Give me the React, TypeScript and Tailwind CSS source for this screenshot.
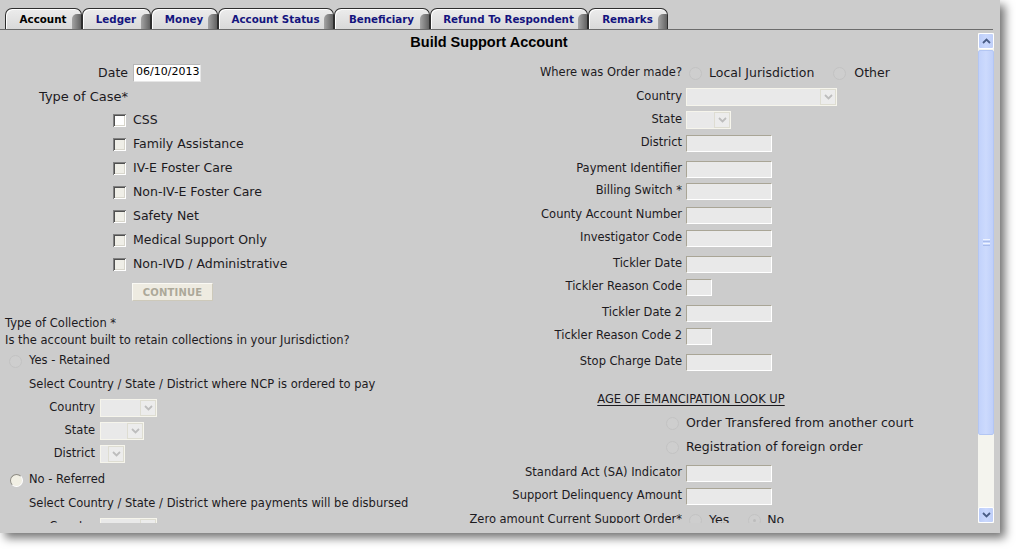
import React from "react";

type TabDef = { label: string; w: string; active?: boolean };

const tabs: TabDef[] = [
  { label: "Account", w: "w-[77px]", active: true },
  { label: "Ledger", w: "w-[69px]" },
  { label: "Money", w: "w-[67px]" },
  { label: "Account Status", w: "w-[116px]" },
  { label: "Beneficiary", w: "w-[96px]" },
  { label: "Refund To Respondent", w: "w-[158px]" },
  { label: "Remarks", w: "w-[80px]" },
];

function Tab({ label, w, active }: TabDef) {
  return (
    <div
      className={`${w} h-[21px] flex rounded-t-[7px] border border-b-0 border-[#2e2e2e] bg-[linear-gradient(to_bottom,#ececec,#d9d9d9)] shadow-[inset_1px_1px_0_#ffffff] overflow-hidden`}
    >
      <div
        className={`flex-1 pl-[8px] flex items-center justify-center text-[10.3px] font-bold leading-none whitespace-nowrap ${
          active ? "text-black" : "text-[#14147e]"
        }`}
      >
        {label}
      </div>
      <div className="w-[9px] mt-[5px] rounded-tl-[5px] bg-[linear-gradient(to_right,#a4a4a4,#626262)]" />
    </div>
  );
}

function Chevron({ up, className }: { up?: boolean; className: string }) {
  return (
    <svg width="9" height="6" viewBox="0 0 9 6" className={className}>
      {up ? (
        <path d="M1 5 L4.5 1.5 L8 5" fill="none" strokeWidth="1.8" />
      ) : (
        <path d="M1 1 L4.5 4.5 L8 1" fill="none" strokeWidth="1.8" />
      )}
    </svg>
  );
}

function FaintRadio({ dot }: { dot?: boolean }) {
  return (
    <span className="w-[13px] h-[13px] rounded-full border border-[#c3c3c3] bg-[#cecece] flex items-center justify-center shrink-0">
      {dot && <span className="w-[3px] h-[3px] rounded-full bg-[#bcbcbc]" />}
    </span>
  );
}

function RealRadio() {
  return (
    <span className="w-[13px] h-[13px] rounded-full border border-[#8e8c84] border-r-[#ffffff] border-b-[#ffffff] bg-[#f1efe4] shrink-0" />
  );
}

function Checkbox({ white }: { white?: boolean }) {
  return (
    <span
      className={`w-[13px] h-[13px] shrink-0 ${
        white ? "bg-white" : "bg-[#efeee7]"
      } shadow-[inset_1px_1px_0_#808080,inset_-1px_-1px_0_#ffffff,inset_2px_2px_0_#505050,inset_-2px_-2px_0_#d8d6cc]`}
    />
  );
}

function TextBox({ w }: { w: string }) {
  return (
    <span
      className={`${w} h-[17px] shrink-0 bg-[#e9e9e9] border border-t-[#a9a596] border-l-[#a9a596] border-r-[#ffffff] border-b-[#ffffff]`}
    />
  );
}

function Select({ w }: { w: string }) {
  return (
    <span className={`${w} h-[18px] shrink-0 flex bg-[#e9e9e9] border border-[#f6f5ec]`}>
      <span className="flex-1" />
      <span className="w-[16px] h-full bg-[#ececec] border border-[#deddd2] flex items-center justify-center">
        <Chevron className="stroke-[#bdbdbd]" />
      </span>
    </span>
  );
}

function Row({ h, children, className }: { h: string; children: React.ReactNode; className?: string }) {
  return (
    <div className={`${h} shrink-0`}>
      <div className={`h-[22px] flex items-center ${className ?? ""}`}>{children}</div>
    </div>
  );
}

function RLabel({ text }: { text: string }) {
  return (
    <span className="w-[276px] shrink-0 text-right text-[11.5px] whitespace-nowrap">{text}</span>
  );
}

function RField({ h, label, children }: { h: string; label: string; children: React.ReactNode }) {
  return (
    <Row h={h}>
      <RLabel text={label} />
      <span className="ml-[4px] flex items-center">{children}</span>
    </Row>
  );
}

function LSel({ h, label, w }: { h: string; label: string; w: string }) {
  return (
    <Row h={h}>
      <span className="w-[95px] shrink-0 text-right text-[11.5px]">{label}</span>
      <span className="ml-[5px] flex">
        <Select w={w} />
      </span>
    </Row>
  );
}

function CheckRow({ label, white, h }: { label: string; white?: boolean; h?: string }) {
  return (
    <Row h={h ?? "h-[24px]"} className="pl-[113px]">
      <Checkbox white={white} />
      <span className="ml-[7px] text-[12.5px] whitespace-nowrap">{label}</span>
    </Row>
  );
}

function ScrollBtn({ up }: { up?: boolean }) {
  return (
    <div className="h-[16px] w-full shrink-0 rounded-[2px] border border-white bg-[linear-gradient(to_right,#bccdf9,#cad8fd,#bfcff9)] flex items-center justify-center">
      <Chevron up={up} className="stroke-[#4a5d86]" />
    </div>
  );
}

export default function App() {
  return (
    <div className="w-[1016px] h-[549px] bg-white overflow-hidden font-['DejaVu_Sans',Verdana,sans-serif] text-[#1c1a1e]">
      <div className="w-[1000px] h-[533px] bg-[#cccccc] shadow-[5px_5px_9px_rgba(0,0,0,0.55)] flex flex-col">
        {/* tab strip */}
        <div className="w-[993px] h-[30px] shrink-0 flex items-end pl-[5px] border-b border-[#6c6c6c]">
          {tabs.map((t) => (
            <Tab key={t.label} {...t} />
          ))}
        </div>

        <div className="flex flex-1 min-h-0">
          {/* content */}
          <div className="w-[978px] h-[493px] overflow-hidden shrink-0">
            <div className="pt-[4px] h-[20px] text-center font-['Liberation_Sans',Arial,sans-serif] font-bold text-[14.5px] leading-[16px] text-black">
              Build Support Account
            </div>

            <div className="mt-[12px] flex items-start">
              {/* left column */}
              <div className="w-[406px] shrink-0 flex flex-col">
                <Row h="h-[24px]">
                  <span className="w-[128px] shrink-0 text-right text-[12.5px]">Date</span>
                  <span className="ml-[5px] -mt-[1px] w-[68px] h-[18px] bg-white border border-[#b6b6b6] border-r-[#e6e6e6] border-b-[#e6e6e6] flex items-center pl-[2px] text-[11px] text-black">
                    06/10/2013
                  </span>
                </Row>
                <Row h="h-[23px]" className="pl-[39px]">
                  <span className="text-[13px]">Type of Case*</span>
                </Row>
                <CheckRow label="CSS" white />
                <CheckRow label="Family Assistance" />
                <CheckRow label="IV-E Foster Care" />
                <CheckRow label="Non-IV-E Foster Care" />
                <CheckRow label="Safety Net" />
                <CheckRow label="Medical Support Only" />
                <CheckRow label="Non-IVD / Administrative" h="h-[28px]" />
                <Row h="h-[32px]" className="pl-[132px]">
                  <span className="w-[81px] h-[18px] flex items-center justify-center bg-[#eeebe1] border border-[#faf9f4] border-r-[#cdc9ba] border-b-[#cdc9ba] text-[10px] font-bold text-[#aca899] tracking-[0.2px]">
                    CONTINUE
                  </span>
                </Row>
                <Row h="h-[17px]" className="pl-[5px]">
                  <span className="text-[11.5px]">Type of Collection *</span>
                </Row>
                <Row h="h-[20px]" className="pl-[5px]">
                  <span className="text-[11.5px] whitespace-nowrap">
                    Is the account built to retain collections in your Jurisdiction?
                  </span>
                </Row>
                <Row h="h-[24px]" className="pl-[9px]">
                  <FaintRadio />
                  <span className="ml-[7px] text-[11.5px]">Yes - Retained</span>
                </Row>
                <Row h="h-[23px]" className="pl-[29px]">
                  <span className="text-[11.5px] whitespace-nowrap">
                    Select Country / State / District where NCP is ordered to pay
                  </span>
                </Row>
                <LSel h="h-[23px]" label="Country" w="w-[57px]" />
                <LSel h="h-[23px]" label="State" w="w-[44px]" />
                <LSel h="h-[26px]" label="District" w="w-[25px]" />
                <Row h="h-[24px]" className="pl-[10px]">
                  <RealRadio />
                  <span className="ml-[6px] text-[11.5px]">No - Referred</span>
                </Row>
                <Row h="h-[23px]" className="pl-[29px]">
                  <span className="text-[11.5px] whitespace-nowrap">
                    Select Country / State / District where payments will be disbursed
                  </span>
                </Row>
                <LSel h="h-[23px]" label="Country" w="w-[57px]" />
              </div>

              {/* right column */}
              <div className="w-[570px] shrink-0 flex flex-col">
                <Row h="h-[24px]">
                  <RLabel text="Where was Order made?" />
                  <span className="ml-[7px]">
                    <FaintRadio />
                  </span>
                  <span className="ml-[7px] text-[12.5px] whitespace-nowrap">Local Jurisdiction</span>
                  <span className="ml-[19px]">
                    <FaintRadio />
                  </span>
                  <span className="ml-[8px] text-[12.5px]">Other</span>
                </Row>
                <RField h="h-[23px]" label="Country">
                  <Select w="w-[151px]" />
                </RField>
                <RField h="h-[23px]" label="State">
                  <Select w="w-[45px]" />
                </RField>
                <RField h="h-[26px]" label="District">
                  <TextBox w="w-[86px]" />
                </RField>
                <RField h="h-[22px]" label="Payment Identifier">
                  <TextBox w="w-[86px]" />
                </RField>
                <RField h="h-[24px]" label="Billing Switch *">
                  <TextBox w="w-[86px]" />
                </RField>
                <RField h="h-[23px]" label="County Account Number">
                  <TextBox w="w-[86px]" />
                </RField>
                <RField h="h-[26px]" label="Investigator Code">
                  <TextBox w="w-[86px]" />
                </RField>
                <RField h="h-[23px]" label="Tickler Date">
                  <TextBox w="w-[86px]" />
                </RField>
                <RField h="h-[26px]" label="Tickler Reason Code">
                  <TextBox w="w-[26px]" />
                </RField>
                <RField h="h-[23px]" label="Tickler Date 2">
                  <TextBox w="w-[86px]" />
                </RField>
                <RField h="h-[26px]" label="Tickler Reason Code 2">
                  <TextBox w="w-[26px]" />
                </RField>
                <RField h="h-[38px]" label="Stop Charge Date">
                  <TextBox w="w-[86px]" />
                </RField>
                <Row h="h-[23px]" className="justify-center">
                  <span className="text-[11.5px] underline underline-offset-[2px]">AGE OF EMANCIPATION LOOK UP</span>
                </Row>
                <Row h="h-[24px]">
                  <span className="w-[273px] shrink-0 flex justify-end">
                    <FaintRadio />
                  </span>
                  <span className="ml-[7px] text-[12.5px] whitespace-nowrap">Order Transfered from another court</span>
                </Row>
                <Row h="h-[26px]">
                  <span className="w-[273px] shrink-0 flex justify-end">
                    <FaintRadio />
                  </span>
                  <span className="ml-[7px] text-[12.5px] whitespace-nowrap">Registration of foreign order</span>
                </Row>
                <RField h="h-[23px]" label="Standard Act (SA) Indicator">
                  <TextBox w="w-[86px]" />
                </RField>
                <RField h="h-[24px]" label="Support Delinquency Amount">
                  <TextBox w="w-[86px]" />
                </RField>
                <Row h="h-[23px]">
                  <RLabel text="Zero amount Current Support Order*" />
                  <span className="ml-[7px]">
                    <FaintRadio />
                  </span>
                  <span className="ml-[7px] text-[12.5px]">Yes</span>
                  <span className="ml-[19px]">
                    <FaintRadio dot />
                  </span>
                  <span className="ml-[6px] text-[12.5px]">No</span>
                </Row>
              </div>
            </div>
          </div>

          {/* scrollbar */}
          <div className="mt-[3px] w-[16px] h-[490px] shrink-0 flex flex-col bg-[#f4f4ee]">
            <ScrollBtn up />
            <div className="mt-[1px] h-[385px] shrink-0 rounded-[2px] border border-[#b3c6f3] bg-[linear-gradient(to_right,#c2d2fb,#ccdafd,#bfcff9)] flex items-center justify-center">
              <div className="flex flex-col gap-[1px]">
                <span className="w-[7px] h-[1px] bg-[#eef3ff]" />
                <span className="w-[7px] h-[1px] bg-[#a9bcec]" />
                <span className="w-[7px] h-[1px] bg-[#eef3ff]" />
                <span className="w-[7px] h-[1px] bg-[#a9bcec]" />
              </div>
            </div>
            <div className="flex-1" />
            <ScrollBtn />
          </div>
        </div>
      </div>
    </div>
  );
}
